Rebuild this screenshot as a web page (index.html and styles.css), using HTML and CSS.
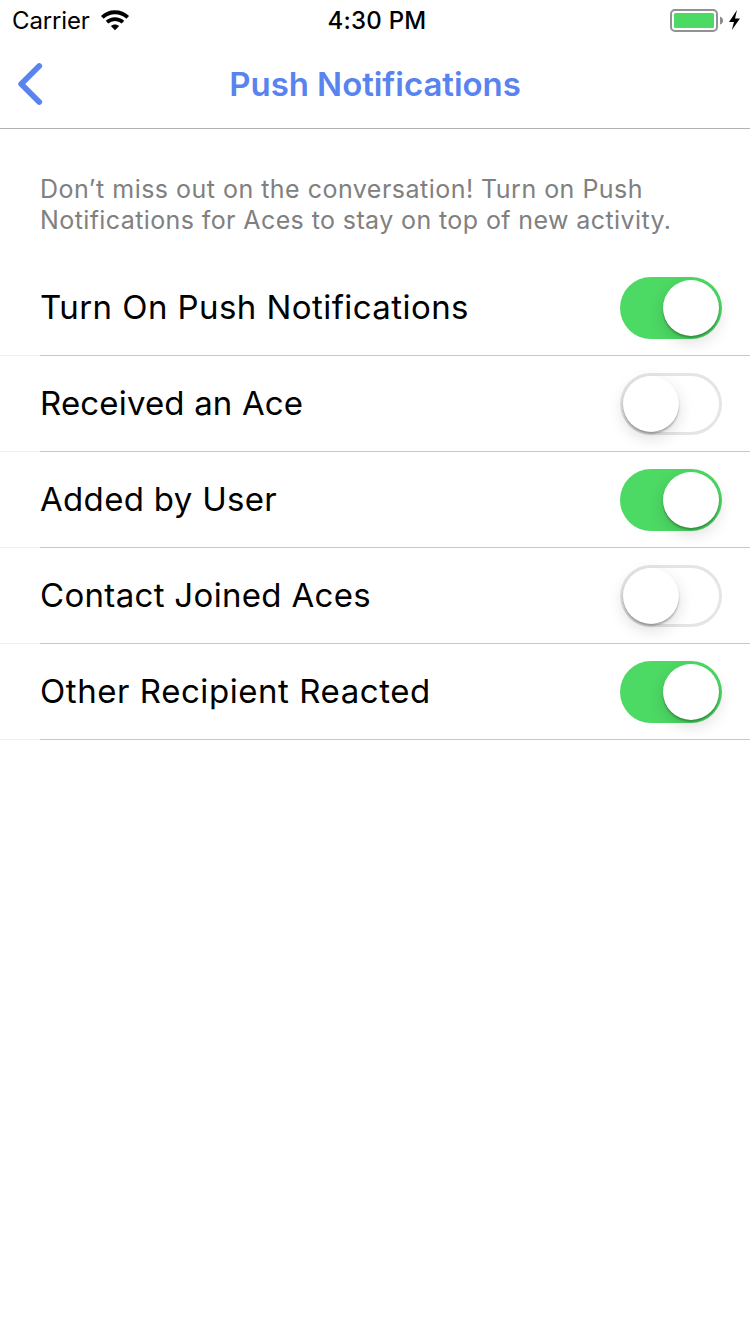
FILE: index.html
```html
<!DOCTYPE html>
<html lang="en">
<head>
<meta charset="utf-8">
<title>Push Notifications</title>
<link rel="stylesheet" href="styles.css">
</head>
<body>
<div class="status-bar">
  <div class="status-left">
    <span class="carrier">Carrier</span>
    <svg class="wifi" width="30" height="22" viewBox="0 0 30 22">
      <path d="M2.3 7.4C9.3.5 20.700.5 27.700 7.400" fill="none" stroke="#000" stroke-width="3.900"/>
      <path d="M7 12.200C11.600 8 18.400 8 23 12.200" fill="none" stroke="#000" stroke-width="3.700"/>
      <path d="M10.800 16C13.200 13.900 16.800 13.900 19.200 16L15 20.300Z"/>
    </svg>
  </div>
  <span class="clock">4:30 PM</span>
  <div class="status-right">
    <svg width="72" height="24" viewBox="0 0 72 24">
      <rect x="1" y="1" width="46" height="21" rx="4" fill="#fff" stroke="#929292" stroke-width="2"/>
      <rect x="4" y="4" width="40" height="15" rx="1.500" fill="#4cd964"/>
      <path d="M50 7.500Q53 8.500 53 11.500T50 15.500Z" fill="#8b8b8b"/>
      <path d="M67 1L59 13H64L61.800 21L70 9.500H65Z"/>
    </svg>
  </div>
</div>
<header class="nav-bar">
  <svg class="back" width="30" height="46" viewBox="0 0 30 46">
    <path d="M24.200 5L6.200 23L24.200 41" fill="none" stroke="#5983ef" stroke-width="5.800" stroke-linecap="round" stroke-linejoin="round"/>
  </svg>
  <h1 class="title">Push Notifications</h1>
</header>
<main>
  <p class="intro"><span class="intro-first">Don’t miss out on the conversation! Turn on Push</span><br><span class="intro-second">Notifications for Aces to stay on top of new activity.</span></p>
  <ul class="settings">
    <li class="row"><span class="label">Turn On Push Notifications</span><span class="switch on"><span class="knob"></span></span></li>
    <li class="row"><span class="label label-ace">Received an Ace</span><span class="switch"><span class="knob"></span></span></li>
    <li class="row"><span class="label label-added">Added by User</span><span class="switch on"><span class="knob"></span></span></li>
    <li class="row"><span class="label label-contact">Contact Joined Aces</span><span class="switch"><span class="knob"></span></span></li>
    <li class="row"><span class="label label-reacted">Other Recipient Reacted</span><span class="switch on"><span class="knob"></span></span></li>
  </ul>
</main>
</body>
</html>
```
FILE: styles.css
```css
* { box-sizing: border-box; }
body {
  margin: 0;
  min-height: 1334px;
  background: #fff;
  color: #000;
  font-family: Inter, "Liberation Sans", sans-serif;
}
svg { display: block; flex: none; }
.status-bar {
  display: grid;
  grid-template-columns: 1fr auto 1fr;
  align-items: center;
  height: 42px;
  padding: 0 8px 0 12px;
  font-size: 24px;
  line-height: 42px;
}
.status-left { display: flex; align-items: center; gap: 10px; }
.carrier { letter-spacing: -0.15px; }
.clock { font-weight: 500; letter-spacing: 0.25px; }
.status-right { display: flex; justify-content: flex-end; }
.nav-bar {
  display: grid;
  grid-template-columns: 60px 1fr 60px;
  align-items: center;
  height: 87px;
  padding-bottom: 3px;
  border-bottom: 1px solid #b2b2b2;
}
.back { margin-left: 15px; }
.title {
  margin: 0;
  color: #5983ef;
  font-size: 33px;
  font-weight: 600;
  line-height: 40px;
  letter-spacing: -0.05px;
  text-align: center;
  white-space: nowrap;
}
.intro {
  margin: 0;
  padding: 45px 0 24px 40px;
  color: #808080;
  font-size: 25px;
  line-height: 31px;
  letter-spacing: 0.4px;
  white-space: nowrap;
}
.intro-first { letter-spacing: 0.48px; }
.settings { margin: 0; padding: 0; list-style: none; }
.row {
  display: flex;
  align-items: center;
  justify-content: space-between;
  height: 96px;
  padding: 0 28px 0 40px;
  background: linear-gradient(to right, #f1f1f1 40px, #c8c8c8 40px) bottom / 100% 1px no-repeat;
}
.label { padding-bottom: 2px; font-size: 33px; line-height: 40px; letter-spacing: 0.43px; white-space: nowrap; }
.label-ace { letter-spacing: 0.16px; }
.label-added { letter-spacing: 0.32px; }
.label-contact { letter-spacing: 0.32px; }
.label-reacted { letter-spacing: 0.56px; }
.switch {
  display: flex;
  align-items: center;
  width: 102px;
  height: 62px;
  padding: 3px;
  border-radius: 31px;
  box-shadow: inset 0 0 0 3px #e5e5e5;
}
.switch.on { justify-content: flex-end; background: #4cd964; box-shadow: none; }
.knob {
  width: 56px;
  height: 56px;
  border-radius: 50%;
  background: #fff;
  box-shadow: 0 2px 2px rgba(0, 0, 0, 0.28), 0 6px 16px rgba(0, 0, 0, 0.14);
}
```
